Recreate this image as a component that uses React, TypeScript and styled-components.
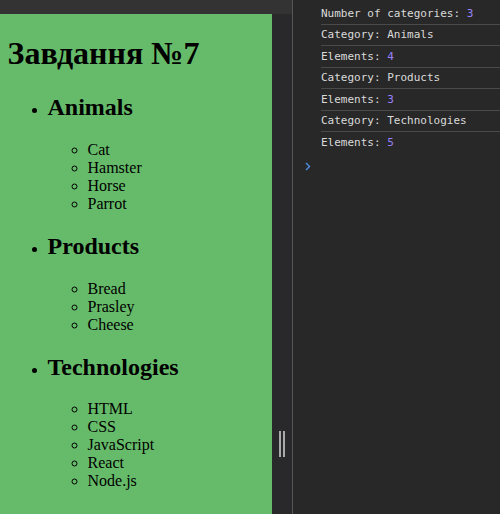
import React from "react";
import styled, { createGlobalStyle } from "styled-components";

const Global = createGlobalStyle`
  html, body { margin: 0; padding: 0; background: #282828; }
  #root { width: 500px; height: 514px; }
`;

const Shell = styled.div`
  display: flex;
  width: 500px;
  height: 514px;
  overflow: hidden;
`;

const LeftPane = styled.div`
  display: flex;
  flex-direction: column;
  width: 292px;
  flex: none;
  border-right: 1px solid #555555;
`;

const TopStrip = styled.div`
  height: 14px;
  background: #333333;
  flex: none;
`;

const PaneRow = styled.div`
  display: flex;
  flex: 1;
  min-height: 0;
`;

const Preview = styled.div`
  display: flow-root;
  width: 272px;
  flex: none;
  background: #66bb6a;
  padding: 0 8px 0 7.5px;
  box-sizing: border-box;
  font-family: "Liberation Serif", "Times New Roman", serif;
  color: #000;
  overflow: hidden;
`;

const Title = styled.h1`
  font-size: 32px;
  font-weight: bold;
  margin: 21.44px 0;
  line-height: normal;
`;

const List = styled.ul<{ $nested?: boolean }>`
  list-style-type: ${(p) => (p.$nested ? "circle" : "disc")};
  margin: ${(p) => (p.$nested ? "0" : "21.44px 0")};
  padding-left: 40px;
  font-size: 16px;
  line-height: normal;
`;

const Item = styled.li`
  display: list-item;
`;

const CategoryName = styled.h2`
  font-size: 24px;
  font-weight: bold;
  margin: 19.92px 0;
  line-height: normal;
`;

const Splitter = styled.div`
  flex: 1;
  background: #29292c;
  display: flex;
  align-items: flex-end;
  padding-bottom: 57px;
  padding-left: 7px;
  box-sizing: border-box;
  gap: 2px;
`;

const HandleBar = styled.div`
  width: 2px;
  height: 26px;
  background: #a9a9a9;
`;

const Console = styled.div`
  flex: 1;
  background: #282828;
  padding-top: 3px;
  display: flex;
  flex-direction: column;
  font-family: "DejaVu Sans Mono", "Liberation Mono", monospace;
  font-size: 11px;
  color: #dadada;
`;

const LogRow = styled.div<{ $last?: boolean }>`
  margin-left: 28px;
  height: 20.5px;
  border-bottom: 1px solid ${(p) => (p.$last ? "transparent" : "#4a4a4a")};
  display: flex;
  align-items: center;
  white-space: pre;
`;

const Num = styled.span`
  color: #9980ff;
`;

const Prompt = styled.div`
  margin-left: 12px;
  padding-top: 8px;
  display: flex;
  align-items: flex-start;
`;

const categories = [
  { name: "Animals", items: ["Cat", "Hamster", "Horse", "Parrot"] },
  { name: "Products", items: ["Bread", "Prasley", "Cheese"] },
  { name: "Technologies", items: ["HTML", "CSS", "JavaScript", "React", "Node.js"] },
];

export default function App() {
  return (
    <>
      <Global />
      <Shell>
        <LeftPane>
          <TopStrip />
          <PaneRow>
            <Preview>
              <Title>Завдання №7</Title>
              <List>
                {categories.map((c) => (
                  <Item key={c.name}>
                    <CategoryName>{c.name}</CategoryName>
                    <List $nested>
                      {c.items.map((i) => (
                        <Item key={i}>{i}</Item>
                      ))}
                    </List>
                  </Item>
                ))}
              </List>
            </Preview>
            <Splitter>
              <HandleBar />
              <HandleBar />
            </Splitter>
          </PaneRow>
        </LeftPane>
        <Console>
          <LogRow>
            Number of categories: <Num>{categories.length}</Num>
          </LogRow>
          {categories.map((c, idx) => (
            <React.Fragment key={c.name}>
              <LogRow>Category: {c.name}</LogRow>
              <LogRow $last={idx === categories.length - 1}>
                Elements: <Num>{c.items.length}</Num>
              </LogRow>
            </React.Fragment>
          ))}
          <Prompt>
            <svg width="6" height="9" viewBox="0 0 6 9">
              <path d="M1 1 L4.5 4.5 L1 8" fill="none" stroke="#4e8fe6" strokeWidth="1.4" />
            </svg>
          </Prompt>
        </Console>
      </Shell>
    </>
  );
}
